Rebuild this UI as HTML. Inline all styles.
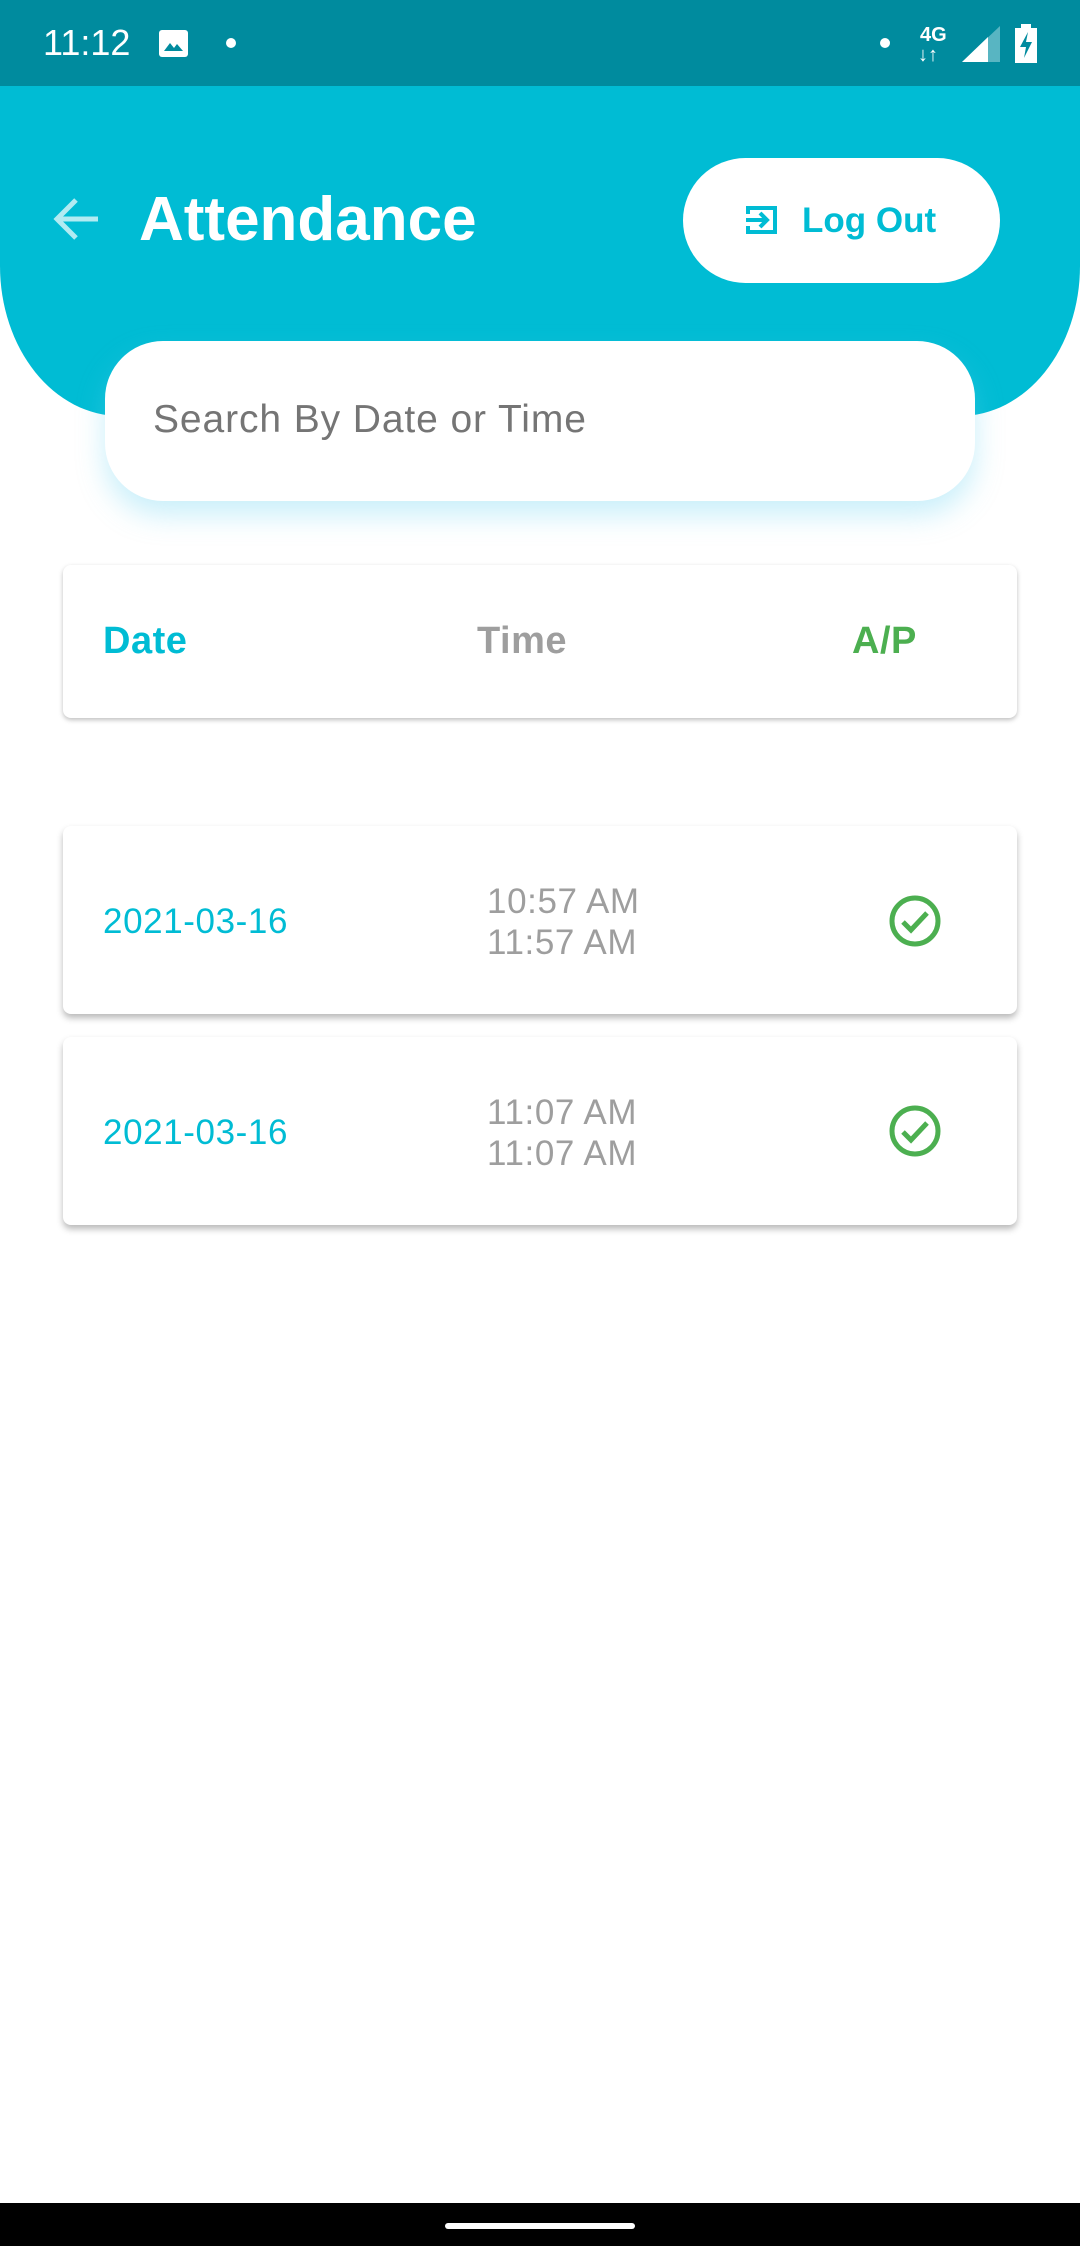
<!DOCTYPE html>
<html><head><meta charset="utf-8"><style>
*{margin:0;padding:0;box-sizing:border-box}
body{width:1080px;height:2246px;background:#fff;position:relative;overflow:hidden;font-family:"Liberation Sans",Roboto,sans-serif}
.abs{position:absolute}
#status{left:0;top:0;width:1080px;height:86px;background:#008b9e}
#hdr{left:0;top:86px;width:1080px;height:330px;background:#00bcd4;border-radius:0 0 120px 120px/0 0 150px 150px}
.card{background:#fff;border-radius:8px;box-shadow:0 2px 5px rgba(0,0,0,.25)}
.row{box-shadow:0 4px 7px rgba(0,0,0,.28)}
.d{color:#00bcd4;font-size:35px;left:103px;letter-spacing:0.6px}
.t{color:#9e9e9e;font-size:35px;left:487px;line-height:41px;letter-spacing:0.6px}
</style></head><body>
<div id="status" class="abs"></div>
<div class="abs" style="left:43px;top:22px;color:#fff;font-size:36px;">11:12</div>
<div class="abs" style="left:159px;top:30px;width:29px;height:27px;background:#fff;border-radius:3px;">
<svg width="29" height="27" viewBox="0 0 29 27"><path d="M5 21 L11 13 L15 18 L18 14 L24 21Z" fill="#008b9e"/></svg></div>
<div class="abs" style="left:226px;top:38px;width:10px;height:10px;border-radius:50%;background:#fff"></div>
<div class="abs" style="left:880px;top:38px;width:10px;height:10px;border-radius:50%;background:#fff"></div>
<div class="abs" style="left:920px;top:24px;color:#fff;font-size:20px;font-weight:bold">4G</div>
<div class="abs" style="left:918px;top:44px;color:#fff;font-size:20px;font-weight:bold">↓↑</div>
<svg class="abs" style="left:962px;top:26px" width="40" height="36"><path d="M0 36 L38 0 V36Z" fill="#58b5c2"/><path d="M0 36 L26 11 V36Z" fill="#fff"/></svg>
<svg class="abs" style="left:1013px;top:24px" width="26" height="40"><rect x="2" y="4" width="22" height="35" fill="#fff"/><rect x="8" y="0" width="10" height="5" fill="#fff"/><path d="M15 8 L7 23 H13 L11 34 L19 18 H13Z" fill="#008b9e"/></svg>
<div id="hdr" class="abs"></div>
<svg class="abs" style="left:52px;top:197px" width="48" height="44" viewBox="0 0 48 44"><path d="M46 22 H6 M24 3 L5 22 L24 41" stroke="#b2ebf2" stroke-width="5" fill="none"/></svg>
<div class="abs" style="left:139px;top:184px;color:#fff;font-size:62px;font-weight:bold;">Attendance</div>
<div class="abs" style="left:683px;top:158px;width:317px;height:125px;background:#fff;border-radius:63px"></div>
<svg class="abs" style="left:746px;top:205px" width="31" height="30" viewBox="0 0 31 30"><path d="M2 9 V3 H29 V27 H2 V21" stroke="#00bcd4" stroke-width="4" fill="none"/><path d="M0 15 H20 M14 8 L21 15 L14 22" stroke="#00bcd4" stroke-width="4" fill="none"/></svg>
<div class="abs" style="left:802px;top:201px;color:#00bcd4;font-size:35px;font-weight:bold">Log Out</div>
<div class="abs" style="left:105px;top:341px;width:870px;height:160px;background:#fff;border-radius:58px;box-shadow:0 14px 28px rgba(100,210,240,.35)"></div>
<div class="abs" style="left:153px;top:398px;color:#757575;font-size:39px;letter-spacing:0.9px">Search By Date or Time</div>
<div class="abs card" style="left:63px;top:565px;width:954px;height:153px"></div>
<div class="abs" style="left:103px;top:620px;color:#00bcd4;font-size:38px;font-weight:bold;letter-spacing:0.5px">Date</div>
<div class="abs" style="left:477px;top:620px;color:#9e9e9e;font-size:38px;font-weight:bold;letter-spacing:0.5px">Time</div>
<div class="abs" style="left:852px;top:620px;color:#4caf50;font-size:38px;font-weight:bold;letter-spacing:0.5px">A/P</div>
<div class="abs card row" style="left:63px;top:826px;width:954px;height:188px"></div>
<div class="abs d" style="top:902px">2021-03-16</div>
<div class="abs t" style="top:881px">10:57 AM<br>11:57 AM</div>
<svg class="abs" style="left:889px;top:895px" width="52" height="52" viewBox="0 0 52 52"><circle cx="26" cy="26" r="23" stroke="#4caf50" stroke-width="5" fill="none"/><path d="M14 27 L22 35 L38 18" stroke="#4caf50" stroke-width="5" fill="none"/></svg>
<div class="abs card row" style="left:63px;top:1037px;width:954px;height:188px"></div>
<div class="abs d" style="top:1113px">2021-03-16</div>
<div class="abs t" style="top:1092px">11:07 AM<br>11:07 AM</div>
<svg class="abs" style="left:889px;top:1105px" width="52" height="52" viewBox="0 0 52 52"><circle cx="26" cy="26" r="23" stroke="#4caf50" stroke-width="5" fill="none"/><path d="M14 27 L22 35 L38 18" stroke="#4caf50" stroke-width="5" fill="none"/></svg>
<div class="abs" style="left:0;top:2203px;width:1080px;height:43px;background:#000"></div>
<div class="abs" style="left:445px;top:2223px;width:190px;height:6px;border-radius:3px;background:#fff"></div>
</body></html>
